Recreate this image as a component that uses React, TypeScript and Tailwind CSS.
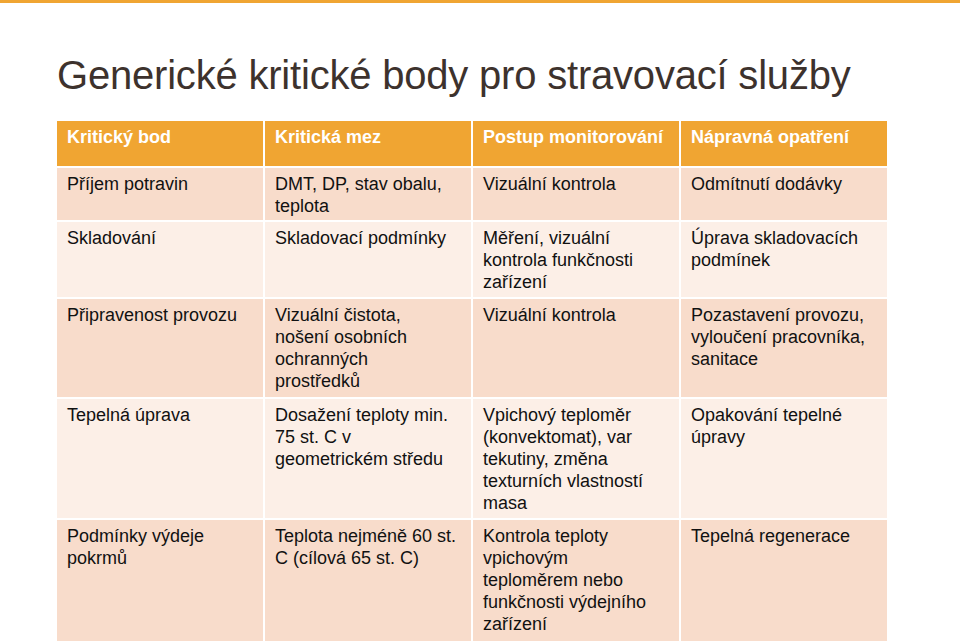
const header = ["Kritický bod", "Kritická mez", "Postup monitorování", "Nápravná opatření"];

const rows: { h: string; bg: string; cells: string[][] }[] = [
  {
    h: "h-[52px]",
    bg: "bg-[#f8dccb]",
    cells: [["Příjem potravin"], ["DMT, DP, stav obalu,", "teplota"], ["Vizuální kontrola"], ["Odmítnutí dodávky"]],
  },
  {
    h: "h-[75px]",
    bg: "bg-[#fcefe7]",
    cells: [
      ["Skladování"],
      ["Skladovací podmínky"],
      ["Měření, vizuální", "kontrola funkčnosti", "zařízení"],
      ["Úprava skladovacích", "podmínek"],
    ],
  },
  {
    h: "h-[98px]",
    bg: "bg-[#f8dccb]",
    cells: [
      ["Připravenost provozu"],
      ["Vizuální čistota,", "nošení osobních", "ochranných", "prostředků"],
      ["Vizuální kontrola"],
      ["Pozastavení provozu,", "vyloučení pracovníka,", "sanitace"],
    ],
  },
  {
    h: "h-[119px]",
    bg: "bg-[#fcefe7]",
    cells: [
      ["Tepelná úprava"],
      ["Dosažení teploty min.", "75 st. C v", "geometrickém středu"],
      ["Vpichový teploměr", "(konvektomat), var", "tekutiny, změna", "texturních vlastností", "masa"],
      ["Opakování tepelné", "úpravy"],
    ],
  },
  {
    h: "h-[121px]",
    bg: "bg-[#f8dccb]",
    cells: [
      ["Podmínky výdeje", "pokrmů"],
      ["Teplota nejméně 60 st.", "C (cílová 65 st. C)"],
      ["Kontrola teploty", "vpichovým", "teploměrem nebo", "funkčnosti výdejního", "zařízení"],
      ["Tepelná regenerace"],
    ],
  },
];

export default function App() {
  return (
    <div className="w-[960px] h-[641px] overflow-hidden bg-white font-['Liberation_Sans',Arial,sans-serif]">
      <div className="h-[3px] bg-[#f0a532]" />
      <h1 className="pl-[57px] pt-[46px] text-[40px] leading-[52px] text-[#3d322d] tracking-[-0.2px]">
        Generické kritické body pro stravovací služby
      </h1>
      <div className="ml-[57px] mt-[20px] w-[830px] grid grid-cols-4 gap-x-[2px]">
        {header.map((t) => (
          <div
            key={t}
            className="h-[45px] bg-[#f0a532] px-[10px] pt-[5px] text-[18px] leading-[22px] font-bold text-white whitespace-nowrap"
          >
            {t}
          </div>
        ))}
      </div>
      <div className="ml-[57px] mt-[2px] w-[830px] flex flex-col gap-y-[2px]">
        {rows.map((r, i) => (
          <div key={i} className="grid grid-cols-4 gap-x-[2px]">
            {r.cells.map((lines, j) => (
              <div
                key={j}
                className={`${r.h} ${r.bg} px-[10px] pt-[5px] text-[18px] leading-[22px] text-[#111] whitespace-nowrap`}
              >
                {lines.map((l, k) => (
                  <div key={k}>{l}</div>
                ))}
              </div>
            ))}
          </div>
        ))}
      </div>
    </div>
  );
}
